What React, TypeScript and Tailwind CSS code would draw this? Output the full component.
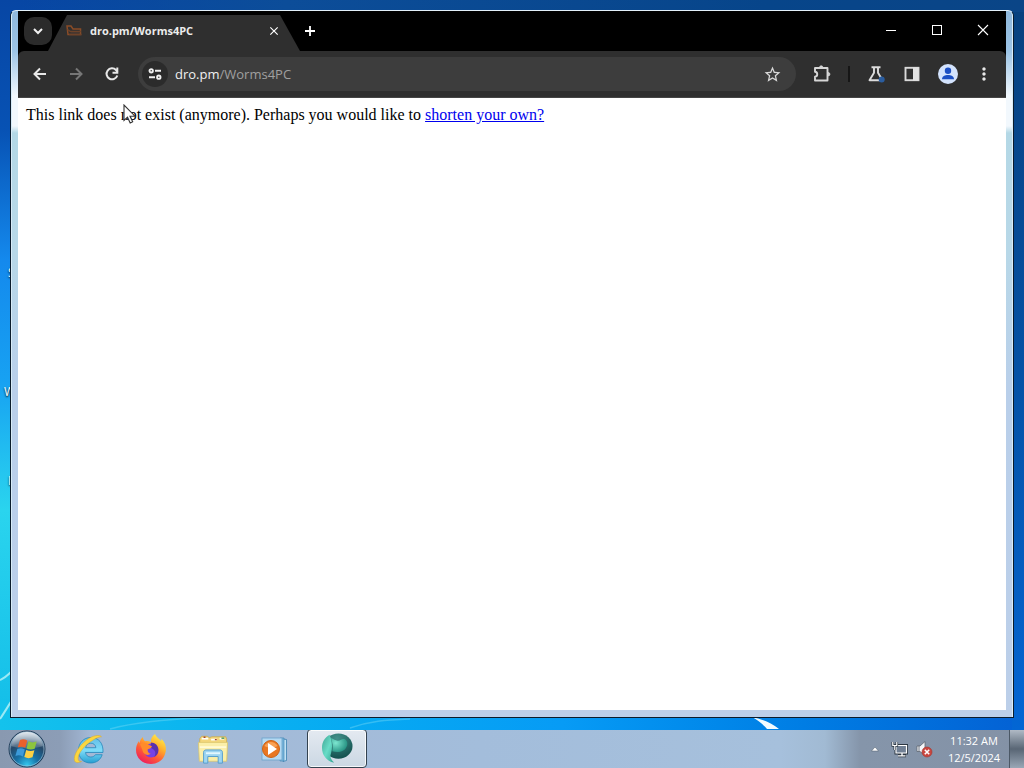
import type { ReactNode } from "react";
import { MdClose, MdMoreVert, MdStarOutline } from "react-icons/md";

interface IconButtonProps {
  label: string;
  className?: string;
  children: ReactNode;
}

const IconButton = ({ label, className = "", children }: IconButtonProps) => (
  <button aria-label={label} className={`flex size-7 shrink-0 items-center justify-center ${className}`}>
    {children}
  </button>
);

const BackIcon = () => (
  <svg viewBox="0 0 16 16" className="size-4" fill="none" stroke="currentColor" strokeWidth="2">
    <path d="M8 2.500L2.500 8 8 13.500M2.500 8H14" />
  </svg>
);

const ForwardIcon = () => (
  <svg viewBox="0 0 16 16" className="size-4" fill="none" stroke="currentColor" strokeWidth="2">
    <path d="M8 2.500L13.500 8 8 13.500M13.500 8H2" />
  </svg>
);

const ReloadIcon = () => (
  <svg viewBox="0 0 16 16" className="size-4" fill="none" stroke="currentColor" strokeWidth="2">
    <path d="M13.300 9.500A5.500 5.500 0 1 1 12 4l1.500 1.800" />
    <path d="M13.300 1.500v5.300H8.500" />
  </svg>
);

const CabinetIcon = () => (
  <svg viewBox="0 0 16 16" className="size-4 shrink-0" fill="none" stroke="#8a4c27" strokeWidth="1.500">
    <path d="M1 3h4l2 3h7.500v5.500H2z" />
    <path d="M1.500 6.500l3 2h10.500M3 11.500h12.500" stroke="#6d4229" />
    <path d="M5 10h8" stroke="#4c3a30" />
  </svg>
);

const TuneIcon = () => (
  <svg viewBox="0 0 16 16" className="size-4" fill="none" stroke="#f0f0f0" strokeWidth="1.900">
    <circle cx="4.200" cy="4.800" r="1.700" />
    <path d="M8 4.800h6M2 11.200h6" />
    <circle cx="11.800" cy="11.200" r="1.700" />
  </svg>
);

const PuzzleIcon = () => (
  <svg viewBox="0 0 18 18" className="size-[18px]" fill="none" stroke="#d6d6d6" strokeWidth="1.900" strokeLinejoin="round">
    <path d="M2 3h12.500v12.500H2v-3.700c3-.3 3-4.700 0-5z" />
    <path d="M6.500 2.500a1.700 1.700 0 0 1 3.400 0zM15.200 7.500a1.700 1.700 0 0 1 0 3.400z" fill="#d6d6d6" strokeWidth="0.800" />
  </svg>
);

const FlaskIcon = () => (
  <svg viewBox="0 0 18 18" className="size-[18px]">
    <path d="M4.500 2.300h9M7 2.500v5.200L2.500 15.200h13L11 7.700V2.500" fill="none" stroke="#dcdcdc" strokeWidth="1.900" strokeLinejoin="round" />
    <circle cx="14.700" cy="14.500" r="3" fill="#2b5d9f" />
  </svg>
);

const SidePanelIcon = () => (
  <svg viewBox="0 0 16 16" className="size-4">
    <rect x="1.500" y="1.800" width="13" height="12.400" fill="none" stroke="#d9d9d9" strokeWidth="1.900" />
    <path d="M9 1.500h5.500v13H9z" fill="#e3e3e3" />
  </svg>
);

const ProfileIcon = () => (
  <svg viewBox="0 0 20 20" className="size-5">
    <circle cx="10" cy="10" r="10" fill="#d3e3fd" />
    <circle cx="10" cy="6.800" r="3.200" fill="#1b4fc4" />
    <path d="M4 15.200c0-3 3-4.200 6-4.200s6 1.200 6 4.200z" fill="#1b4fc4" />
  </svg>
);

const StartOrb = () => (
  <svg viewBox="0 0 40 40" className="size-10">
    <defs>
      <radialGradient id="orb" cx="50%" cy="95%" r="90%">
        <stop offset="0" stopColor="#35c8ee" />
        <stop offset="0.350" stopColor="#1670a5" />
        <stop offset="0.700" stopColor="#264868" />
        <stop offset="1" stopColor="#8fa9bf" />
      </radialGradient>
      <linearGradient id="orbShine" x1="0" y1="0" x2="0" y2="1">
        <stop offset="0" stopColor="#fff" stopOpacity="0.700" />
        <stop offset="1" stopColor="#fff" stopOpacity="0.150" />
      </linearGradient>
    </defs>
    <circle cx="20" cy="20" r="18" fill="url(#orb)" stroke="#1f3b57" strokeWidth="1" />
    <circle cx="20" cy="20" r="17" fill="none" stroke="#a9c9de" strokeOpacity="0.600" />
    <path d="M4 17C6 7 13 3 20 3s14 4 16 14c-8 3-24 3-32 0z" fill="url(#orbShine)" />
    <path d="M13 11c2.800-1.200 4.800-.8 7.300.6l-2 7.200c-2.500-1.400-4.800-1.500-7.500-.5z" fill="#e9602c" />
    <path d="M21.500 12.300c2.700 1.400 5.200 1.400 8.200.3l-2 7.100c-2.800 1.200-5.400 1.100-8.200-.3z" fill="#8cc43e" />
    <path d="M10.400 19.800c2.700-1 4.900-.8 7.400.6l-2 7c-2.500-1.300-4.800-1.400-7.400-.4z" fill="#3c9ad9" />
    <path d="M19.200 21c2.900 1.400 5.400 1.400 8.200.3l-1.900 7c-2.800 1.200-5.400 1.100-8.200-.3z" fill="#fbd044" />
  </svg>
);

const ExplorerIcon = () => (
  <svg viewBox="0 0 32 32" className="size-8">
    <defs>
      <linearGradient id="ie" x1="0" y1="0" x2="0" y2="1">
        <stop offset="0" stopColor="#62bce6" />
        <stop offset="0.500" stopColor="#7fdcf8" />
        <stop offset="1" stopColor="#269fd2" />
      </linearGradient>
    </defs>
    <path
      d="M30 19.500H12.500c.4 3 2.500 4.500 5.200 4.500 2.200 0 3.700-.8 4.700-2.300h6.800C27.500 27 23.300 30 17.600 30 10.500 30 5.500 25 5.500 17.500S10.600 4.500 17.800 4.500C25.600 4.500 30.500 10 30 19.500zM12.600 14.700h10.300c-.3-2.800-2.300-4.500-5-4.500-2.900 0-4.800 1.600-5.300 4.500z"
      fill="url(#ie)"
      stroke="#2688bb"
      strokeWidth="0.800"
    />
    <path
      d="M28.500 3.800C27 1.500 20 2 13.500 7 5.500 13.200.2 22.500 1.500 27.500c.8 2.600 4 2.500 7 1-2.200.2-3.400-.8-3.400-3.300 0-4 4.600-10.500 10.600-15.100C20.500 6.400 26 3.400 28.500 3.800z"
      fill="#fbd63f"
      stroke="#d8a829"
      strokeWidth="0.500"
    />
  </svg>
);

const FirefoxIcon = () => (
  <svg viewBox="0 0 32 32" className="size-8">
    <defs>
      <linearGradient id="fox" x1="0.850" y1="0.050" x2="0.250" y2="1">
        <stop offset="0" stopColor="#fff04d" />
        <stop offset="0.350" stopColor="#ffae2b" />
        <stop offset="0.650" stopColor="#ff5b36" />
        <stop offset="1" stopColor="#ed1960" />
      </linearGradient>
    </defs>
    <path
      d="M20 1c1 3 4 4.500 6 7 .5-.8.500-1.500.4-2.300C30 9 31.500 13.500 30.800 18 29.700 26 23.500 31 16 31 7.500 31 1 25 1 17c0-3.500 1-6.500 3-9 0 1 .2 1.700.6 2.300C5 7.500 6 5.300 8 4c0 2 .7 3.400 2.200 4.300 2-.5 4 0 5.800.9C15.500 6 17 3 20 1z"
      fill="url(#fox)"
    />
    <circle cx="16" cy="17.500" r="7" fill="#7542e5" />
    <path d="M16 9.500c4 0 7.500 3 7.500 7.500 0 3.500-2 6-4.500 7.200 2-3 1.700-6.200-.5-7.700-1-.7-2-1-3-2.200z" fill="#5a32ae" />
    <path d="M5 11c3-2 7-1.500 9 1l3 1.300c-.3 1.700-2.500 2.500-4.200 2.900-.7 1.800.5 4 3 4.600-3 2.500-7.800.8-8.500-4z" fill="#ff8b2b" />
  </svg>
);

const FolderIcon = () => (
  <svg viewBox="0 0 34 32" className="size-8">
    <path d="M3 5l2-2.500h6L13 4l3-1h14.500l1 2.500V27H2.500z" fill="#f3d77b" stroke="#c7a94c" strokeWidth="0.800" />
    <path d="M5 5h7M15 6h6M24 5h5" stroke="#fff" strokeWidth="2" />
    <path d="M7 3.500h2M19 6h2" stroke="#a44333" strokeWidth="1.500" />
    <path d="M26 4.500h3" stroke="#479657" strokeWidth="1.500" />
    <path d="M1.500 9h31l-1 20h-29z" fill="#fbefa9" stroke="#dac66c" strokeWidth="0.800" />
    <path d="M3 14h28" stroke="#fffbd5" strokeWidth="2" />
    <path d="M7 31V19.500c0-1.500 1-2.500 2.500-2.500h15c1.500 0 2.500 1 2.500 2.500V31h-4.500v-7h-11v7z" fill="#9ed5f1" stroke="#539dcd" />
    <path d="M9.500 20.500h15" stroke="#e3f7ff" strokeWidth="2" />
  </svg>
);

const MediaPlayerIcon = () => (
  <svg viewBox="0 0 32 32" className="size-8">
    <path d="M24 6l3.500.5v21l-3.500 1z" fill="#bfe1f5" stroke="#3b7fae" strokeWidth="0.800" />
    <path d="M21 5h4v23h-4z" fill="#79b6dd" stroke="#3b7fae" strokeWidth="0.600" />
    <rect x="3" y="5" width="20" height="22" fill="#b5d9f2" stroke="#6aa2ca" strokeWidth="0.800" />
    <circle cx="12" cy="16" r="8.500" fill="#e87722" stroke="#cc6317" />
    <path d="M5.500 13c3-5.500 10-5.500 13 0-4 2-9 2-13 0z" fill="#ffb36b" opacity="0.700" />
    <path d="M9 10v12l9-6z" fill="#fff" />
  </svg>
);

const OrbitumIcon = () => (
  <svg viewBox="0 0 34 34" className="size-8">
    <defs>
      <radialGradient id="ballDark" cx="45%" cy="20%" r="85%">
        <stop offset="0" stopColor="#41908a" />
        <stop offset="1" stopColor="#104c4a" />
      </radialGradient>
      <linearGradient id="ballLight" x1="0" y1="0" x2="1" y2="1">
        <stop offset="0" stopColor="#3fa594" />
        <stop offset="0.500" stopColor="#68dcc7" />
        <stop offset="1" stopColor="#31a390" />
      </linearGradient>
      <radialGradient id="ballFace" cx="30%" cy="35%" r="75%">
        <stop offset="0" stopColor="#7de6d0" />
        <stop offset="1" stopColor="#218d7e" />
      </radialGradient>
    </defs>
    <ellipse cx="18.500" cy="15" rx="15" ry="13.500" fill="url(#ballDark)" />
    <path d="M9 3C2 7-.5 15 2 22.500c1.800 5 6 9 12 10-3.500-3-4.800-6-3.500-9.500C12.500 17 12 9 9 3z" fill="url(#ballLight)" />
    <path d="M10.500 6.500c3 1 5 3 7.500 2.800 3-.2 5-2.800 7.500-1.500 3.800 2.500 3 8-.5 11-3.500 2.800-8.500 3.200-13 1.700 1-4.500.5-9-1.500-14z" fill="url(#ballFace)" />
  </svg>
);

const NetworkIcon = () => (
  <svg viewBox="0 0 18 18" className="size-[18px]" fill="none">
    <path d="M5 5.500h10.500v7.500H5zM7 15.800h8M11 13v3" stroke="#2c3742" strokeWidth="3" />
    <path d="M5 5.500h10.500v7.500H5z" fill="#718094" stroke="#fff" strokeWidth="1.200" />
    <path d="M7 15.800h7.500M11 13v3" stroke="#fff" strokeWidth="1.300" />
    <path d="M1.800 2v3.500h4V2M3.800 5.500V10" stroke="#2c3742" strokeWidth="2.600" />
    <path d="M1.800 2v3.500h4V2M3.800 5.500V10" stroke="#fff" strokeWidth="1.200" />
  </svg>
);

const MutedIcon = () => (
  <svg viewBox="0 0 18 18" className="size-[18px]">
    <path d="M2 6h3l5-4.500v14L5 11.500H2z" fill="#f5f7fa" stroke="#5d6570" strokeWidth="0.800" />
    <path d="M4 5.500v6.500" stroke="#6c7480" />
    <circle cx="12" cy="12" r="5" fill="#c9463f" stroke="#a5352e" strokeWidth="0.600" />
    <path d="M9.800 9.800l4.400 4.400M14.200 9.800l-4.400 4.400" stroke="#fff" strokeWidth="1.600" />
  </svg>
);

const TabStrip = () => (
  <div className="flex h-10 items-end bg-black pl-1.5">
    <IconButton label="Search tabs" className="mb-1.5 rounded-[10px] bg-[#2b2b2b]">
      <svg viewBox="0 0 12 12" className="size-3" fill="none" stroke="#f0f0f0" strokeWidth="2">
        <path d="M2 4l4 4 4-4" />
      </svg>
    </IconButton>
    <div className="-ml-1 flex h-9 w-[252px] items-center bg-[#2f2f2f] pr-[18px] pb-1 pl-[18px] [clip-path:polygon(19px_0,calc(100%-20px)_0,100%_100%,0_100%)]">
      <CabinetIcon />
      <span className="ml-2 flex-1 truncate text-[11px] font-bold text-[#ececec]">dro.pm/Worms4PC</span>
      <button aria-label="Close tab" className="flex size-4 items-center justify-center">
        <MdClose className="size-3.5 text-white" />
      </button>
    </div>
    <button aria-label="New tab" className="mb-3 ml-0.5 flex size-4 items-center justify-center">
      <svg viewBox="0 0 12 12" className="size-3" stroke="#fff" strokeWidth="1.800">
        <path d="M6 1v10M1 6h10" />
      </svg>
    </button>
    <div className="ml-auto flex h-[38px] items-center self-start text-white">
      <button aria-label="Minimize" className="flex h-9 w-[46px] items-center justify-center">
        <span className="h-px w-2.5 bg-white" />
      </button>
      <button aria-label="Maximize" className="flex h-9 w-[46px] items-center justify-center">
        <span className="size-2.5 border border-white" />
      </button>
      <button aria-label="Close" className="flex h-9 w-[46px] items-center justify-center">
        <svg viewBox="0 0 12 12" className="size-3" stroke="#fff" strokeWidth="1.100">
          <path d="M1 1l10 10M11 1L1 11" />
        </svg>
      </button>
    </div>
  </div>
);

const Toolbar = () => (
  <div className="bg-black">
    <div className="flex h-[47px] items-center gap-2 rounded-t-md border-b border-[#454545] bg-[#2f2f2f] px-2 text-[#e8e8e8]">
      <IconButton label="Back">
        <BackIcon />
      </IconButton>
      <IconButton label="Forward" className="text-[#777]">
        <ForwardIcon />
      </IconButton>
      <IconButton label="Reload">
        <ReloadIcon />
      </IconButton>
      <div className="ml-1 flex h-[34px] min-w-0 flex-1 items-center rounded-full bg-[#3d3d3d] pr-2.5 pl-1">
        <button
          aria-label="Site information"
          className="flex size-[26px] shrink-0 items-center justify-center rounded-full bg-[#2b2b2b]"
        >
          <TuneIcon />
        </button>
        <div className="relative ml-[7px] flex-1 text-[13px] leading-5">
          <input
            aria-label="Address"
            defaultValue="dro.pm/Worms4PC"
            className="block w-full bg-transparent text-transparent outline-none"
          />
          <span className="pointer-events-none absolute inset-0 text-[#f0f0f0]">
            dro.pm<span className="text-[#a0a0a0]">/Worms4PC</span>
          </span>
        </div>
        <IconButton label="Bookmark this page">
          <MdStarOutline className="size-[19px] text-[#d8d8d8]" />
        </IconButton>
      </div>
      <IconButton label="Extensions" className="ml-1">
        <PuzzleIcon />
      </IconButton>
      <span className="mx-1 h-4 w-0.5 bg-[#161616]" />
      <IconButton label="Experiments">
        <FlaskIcon />
      </IconButton>
      <IconButton label="Side panel">
        <SidePanelIcon />
      </IconButton>
      <IconButton label="Profile">
        <ProfileIcon />
      </IconButton>
      <IconButton label="Menu">
        <MdMoreVert className="size-5" />
      </IconButton>
    </div>
  </div>
);

const Cursor = () => (
  <svg viewBox="0 0 13 20" className="pointer-events-none absolute top-1.5 left-[105px] h-5 w-[13px]">
    <path d="M1 1v15.500l3.500-3.300 2.700 5.800 2.500-1.200L7 12.200h5z" fill="#fff" stroke="#333" strokeWidth="1.100" />
  </svg>
);

const BrowserWindow = () => (
  <div className="relative flex min-h-0 flex-1 rounded-t-md border border-[#0b1c2c] border-t-[#e4f1fa] bg-[linear-gradient(#8fb8dc,#9cc4e6_40px,#f2f8fd_85px,#f2f8fd_115px,#b4d8e6_122px,#b8d8e8_240px,#b9cfea_380px,#bccfe9)]">
    <div className="flex min-w-0 flex-1 flex-col rounded-t-[5px] border-x border-[#d8ecf8] px-[6px] pb-[7px]">
      <TabStrip />
      <Toolbar />
      <main className="relative flex-1 bg-white p-2 font-['Liberation_Serif',serif] text-base leading-[18px] text-black">
        <p>
          This link does not exist (anymore). Perhaps you would like to{" "}
          <a href="#shorten" className="text-[#0000ee] underline">
            shorten your own?
          </a>
        </p>
        <Cursor />
      </main>
    </div>
  </div>
);

const pinned = [
  { name: "Internet Explorer", icon: <ExplorerIcon /> },
  { name: "Firefox", icon: <FirefoxIcon /> },
  { name: "Windows Explorer", icon: <FolderIcon /> },
  { name: "Media Player", icon: <MediaPlayerIcon /> },
];

const Taskbar = () => (
  <footer className="flex h-10 shrink-0 border-t border-[#1f4a68] bg-[linear-gradient(90deg,#8999b0,#8c9db6_60px,#a3b8d5_90px,#a3bddb_480px,#a6c0dc_780px,#a1bad3_825px,#8595aa_860px,#8492a6)]">
    <div className="flex flex-1 border-t border-white/40 pl-[7px]">
      <button aria-label="Start" className="mr-3 flex w-10 items-center">
        <StartOrb />
      </button>
      <div className="flex gap-0.5">
        {pinned.map((app) => (
          <button key={app.name} aria-label={app.name} className="flex w-[60px] items-center justify-center">
            {app.icon}
          </button>
        ))}
        <button
          aria-label="Browser"
          className="-mt-px flex w-[60px] items-start justify-center rounded-sm border border-[#33424f] bg-linear-to-b from-[#e4eaf1] to-[#cbd7e3] pt-0.5 inset-ring inset-ring-white/80"
        >
          <OrbitumIcon />
        </button>
      </div>
      <div className="ml-auto flex items-center text-white">
        <button aria-label="Show hidden icons" className="flex h-full w-6 items-center justify-center">
          <svg viewBox="0 0 8 6" className="h-1.5 w-2">
            <path d="M4 1l3.500 4h-7z" fill="#fff" stroke="#4d5a69" strokeWidth="0.500" />
          </svg>
        </button>
        <div className="ml-1 flex items-center gap-1.5">
          <NetworkIcon />
          <MutedIcon />
        </div>
        <div className="mr-1 ml-2.5 w-[62px] pb-px text-center text-[11px] leading-[17px]">
          <div>11:32 AM</div>
          <div>12/5/2024</div>
        </div>
        <button
          aria-label="Show desktop"
          className="h-full w-[15px] border-l border-[#4b5866] bg-linear-to-b from-[#b0bac6] via-[#596675] to-[#9aa7b6]"
        />
      </div>
    </div>
  </footer>
);

const Desktop = () => (
  <div className="pointer-events-none absolute inset-0 overflow-hidden text-xs text-white [text-shadow:0_1px_2px_#000]">
    <span className="absolute top-[265px] left-2">S</span>
    <span className="absolute top-[384px] left-1">W</span>
    <span className="absolute top-[473px] left-2">I</span>
    <svg viewBox="0 0 1024 768" preserveAspectRatio="none" className="absolute inset-0 size-full" fill="none">
      <path d="M0 680C5 678 8 675 12 671M0 719C4 713 7 708 12 700" stroke="#9be9f5" strokeWidth="2" />
      <path d="M110 729c30-8 60-10 90-11M350 728c20-7 35-8 60-9" stroke="#7cdcf5" strokeWidth="1.500" opacity="0.400" />
      <path d="M752 717c10 2 20 6 27 12h-12c-2-3-8-8-15-12z" fill="#f3fbff" />
    </svg>
  </div>
);

export default function App() {
  return (
    <div className="relative flex h-screen flex-col overflow-hidden bg-[linear-gradient(90deg,transparent_2%,#0c4d99_28%,#07458a_75%,#0a4587),linear-gradient(#0746a4,#0752b4_130px,#1489ed_260px,#17a1f2_380px,#2ad4ee_510px,#12bce8_730px)] font-['Open_Sans','Noto_Sans',sans-serif]">
      {/* lower and right edges of the wallpaper */}
      <div className="absolute inset-x-0 top-[700px] h-[30px] bg-linear-to-r from-[#14c2ec] via-[#079bf5] via-55% to-[#0461d4]" />
      <div className="absolute top-[12px] right-0 h-[718px] w-3 bg-linear-to-b from-[#07417f] via-[#0552a5] to-[#0366d4]" />
      <Desktop />
      <div className="flex min-h-0 flex-1 p-2.5">
        <BrowserWindow />
      </div>
      <Taskbar />
    </div>
  );
}
